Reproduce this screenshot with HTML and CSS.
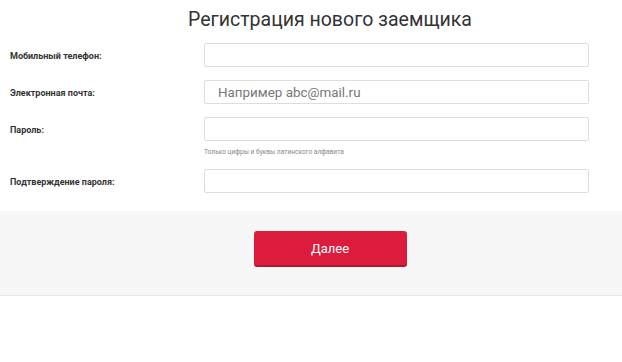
FILE: index.html
```html
<!DOCTYPE html>
<html lang="ru">
<head>
<meta charset="utf-8">
<title>Регистрация нового заемщика</title>
<link rel="stylesheet" href="styles.css">
</head>
<body>
<div class="page">
  <h1 class="title">Регистрация нового заемщика</h1>
  <form class="form">
    <div class="row">
      <label class="label" for="phone">Мобильный телефон:</label>
      <input class="field" id="phone" type="text">
    </div>
    <div class="row">
      <label class="label" for="email">Электронная почта:</label>
      <input class="field" id="email" type="text" placeholder="Например abc@mail.ru">
    </div>
    <div class="row">
      <label class="label" for="pass">Пароль:</label>
      <input class="field" id="pass" type="password">
    </div>
    <div class="hint-row">
      <span class="hint">Только цифры и буквы латинского алфавита</span>
    </div>
    <div class="row">
      <label class="label" for="pass2">Подтверждение пароля:</label>
      <input class="field" id="pass2" type="password">
    </div>
  </form>
  <div class="actions">
    <button class="btn" type="button">Далее</button>
  </div>
</div>
</body>
</html>
```
FILE: styles.css
```css
html, body {
  margin: 0;
  padding: 0;
  background: #fff;
}
body {
  font-family: Roboto, "Open Sans", sans-serif;
  color: #333;
}
.title {
  margin: 5px 0 0;
  padding-left: 38px;
  height: 30px;
  line-height: 30px;
  text-align: center;
  font-size: 19.5px;
  font-weight: 400;
  color: #333;
}
.form {
  display: flex;
  flex-direction: column;
  padding: 8px 0 0;
}
.row {
  display: grid;
  grid-template-columns: 204px 385px;
  align-items: center;
  height: 24px;
  margin-bottom: 13px;
}
.label {
  padding-left: 10px;
  font-size: 9px;
  font-weight: 700;
  color: #333;
  padding-top: 2px;
}
.field {
  box-sizing: border-box;
  width: 385px;
  height: 24px;
  margin: 0;
  border: 1px solid #ddd;
  border-radius: 2px;
  background: #fff;
  padding: 0 13px;
  font-family: Roboto, "Open Sans", sans-serif;
  font-size: 13.4px;
  color: #333;
  outline: none;
}
.field::placeholder {
  color: #777;
}
.hint-row {
  padding-left: 204px;
  margin-top: -10px;
  height: 25px;
  line-height: 10px;
}
.hint {
  font-size: 6.6px;
  color: #888;
}
.actions {
  margin-top: 5px;
  height: 84px;
  background: #f7f7f7;
  border-bottom: 1px solid #e6e6e6;
  display: flex;
  justify-content: center;
  align-items: flex-start;
  padding-left: 38px;
}
.btn {
  margin-top: 20px;
  width: 153px;
  height: 36px;
  border: none;
  border-bottom: 2px solid #b3162f;
  border-radius: 3px;
  background: #dd1c3d;
  color: #fff;
  font-family: Roboto, "Open Sans", sans-serif;
  font-size: 13px;
  font-weight: 400;
  padding: 0;
}
```
